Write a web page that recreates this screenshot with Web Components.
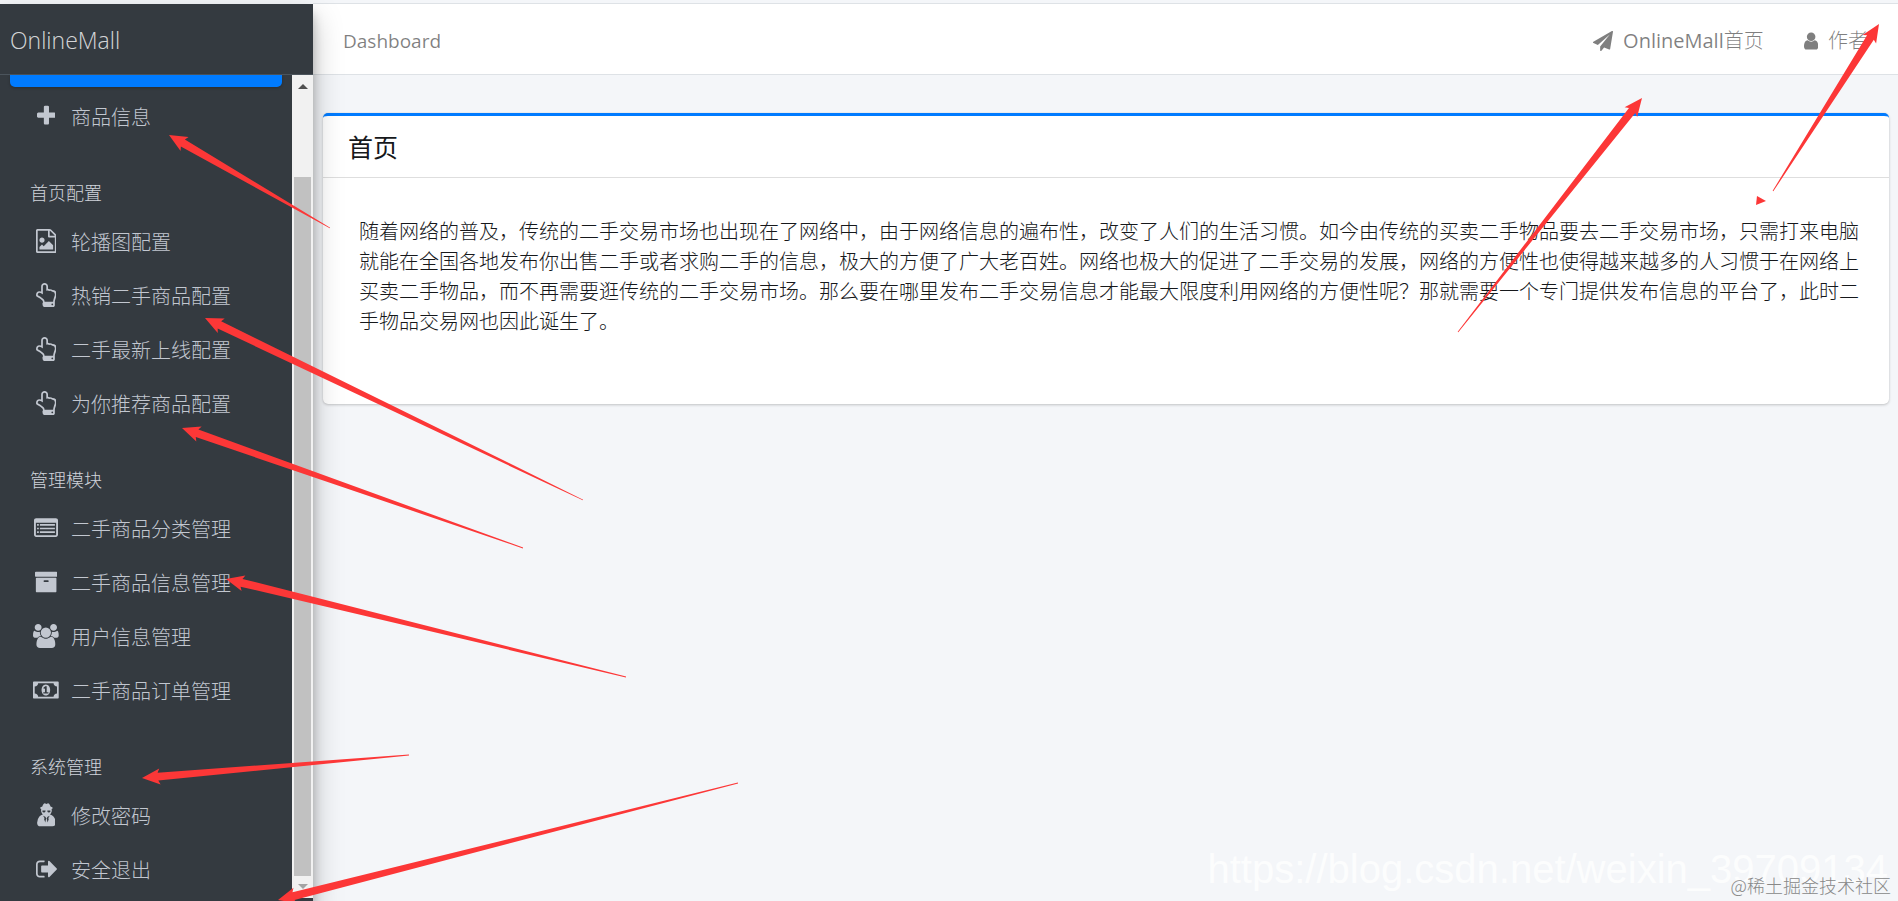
<!DOCTYPE html>
<html lang="zh-CN">
<head>
<meta charset="utf-8">
<title>OnlineMall | Dashboard</title>
<style>
  html, body {
    margin: 0;
    height: 100%;
  }

  body {
    font-family: "Open Sans", "Noto Sans CJK SC", sans-serif;
    font-size: 20px;
    font-weight: 300;
    line-height: 30px;
    color: #16181b;
    background: #f4f6f9;
  }

  top-link span {
    font-weight: 300;
  }
</style>
</head>
<body>
<mall-layout>
  <mall-sidebar slot="sidebar" brand="OnlineMall">
    <nav-item active></nav-item>
    <nav-item icon="plus">商品信息</nav-item>
    <nav-header>首页配置</nav-header>
    <nav-item icon="image">轮播图配置</nav-item>
    <nav-item icon="hand">热销二手商品配置</nav-item>
    <nav-item icon="hand">二手最新上线配置</nav-item>
    <nav-item icon="hand">为你推荐商品配置</nav-item>
    <nav-header>管理模块</nav-header>
    <nav-item icon="list">二手商品分类管理</nav-item>
    <nav-item icon="archive">二手商品信息管理</nav-item>
    <nav-item icon="users">用户信息管理</nav-item>
    <nav-item icon="money">二手商品订单管理</nav-item>
    <nav-header>系统管理</nav-header>
    <nav-item icon="secret">修改密码</nav-item>
    <nav-item icon="signout">安全退出</nav-item>
  </mall-sidebar>
  <mall-topbar slot="topbar">
    <top-link>Dashboard</top-link>
    <top-link slot="right" icon="plane">OnlineMall<span>首页</span></top-link>
    <top-link slot="right" icon="user"><span>作者</span></top-link>
  </mall-topbar>
  <mall-card>
    <span slot="title">首页</span>
    随着网络的普及，传统的二手交易市场也出现在了网络中，由于网络信息的遍布性，改变了人们的生活习惯。如今由传统的买卖二手物品要去二手交易市场，只需打来电脑就能在全国各地发布你出售二手或者求购二手的信息，极大的方便了广大老百姓。网络也极大的促进了二手交易的发展，网络的方便性也使得越来越多的人习惯于在网络上买卖二手物品，而不再需要逛传统的二手交易市场。那么要在哪里发布二手交易信息才能最大限度利用网络的方便性呢？那就需要一个专门提供发布信息的平台了，此时二手物品交易网也因此诞生了。
  </mall-card>
</mall-layout>
<water-mark>
  https://blog.csdn.net/weixin_39709134
  <span slot="site">@稀土掘金技术社区</span>
</water-mark>
<arrow-layer></arrow-layer>

<script>
const ICONS = {
  plus: { box: "192 0 1408 1792", d: "M1600 736v192q0 40-28 68t-68 28h-416v416q0 40-28 68t-68 28h-192q-40 0-68-28t-28-68v-416h-416q-40 0-68-28t-28-68v-192q0-40 28-68t68-28h416v-416q0-40 28-68t68-28h192q40 0 68 28t28 68v416h416q40 0 68 28t28 68z" },
  image: { box: "128 0 1536 1792", d: "M1596 380q28 28 48 76t20 88v1152q0 40-28 68t-68 28h-1344q-40 0-68-28t-28-68v-1600q0-40 28-68t68-28h896q40 0 88 20t76 48zm-444-244v376h376q-10-29-22-41l-313-313q-12-12-41-22zm384 1528v-1024h-416q-40 0-68-28t-28-68v-416h-768v1536h1280zm-128-448v320h-1024v-192l192-192 128 128 384-384zm-832-192q-80 0-136-56t-56-136 56-136 136-56 136 56 56 136-56 136-136 56z" },
  hand: { box: "128 0 1536 1792", d: "M1408 1600q0-26-19-45t-45-19-45 19-19 45 19 45 45 19 45-19 19-45zm128-764q0-189-167-189-26 0-56 5-16-30-52.5-47.5t-73.5-17.5-69 18q-50-53-119-53-25 0-55.5 10t-47.5 25v-331q0-52-38-90t-90-38q-51 0-89.5 39t-38.5 89v576q-20 0-48.5-15t-55-33-68-33-84.5-15q-67 0-97.5 44.5t-30.5 115.5q0 24 139 90 44 24 65 37 64 40 145 112 81 71 106 101 57 69 57 140v32h640v-32q0-72 32-167t64-193.5 32-179.5zm128-5q0 133-69 322-59 164-59 223v288q0 53-37.5 90.5t-90.5 37.5h-640q-53 0-90.5-37.5t-37.5-90.5v-288q0-10-4.5-21.5t-14-23.5-18-22.5-22.5-24-21.5-20.5-21.5-19-17-14q-74-65-129-100-21-13-62-33t-72-37-63-40.5-49.5-55-17.5-69.5q0-125 67-206.5t189-81.5q68 0 128 22v-374q0-104 77-180t179-76q105 0 181 75.5t76 180.5v169q62 4 119 37 21-3 43-3 101 0 178 60 139-1 219.5 85t80.5 227zM600 1520h660v190h-620z" },
  list: { box: "0 0 1792 1792", d: "M160 160h1472q66 0 113 47t47 113v1088q0 66-47 113t-113 47h-1472q-66 0-113-47t-47-113v-1088q0-66 47-113t113-47zM140 500v900q0 28 28 28h1456q28 0 28-28v-900zM230 600h128v128h-128zM230 870h128v128h-128zM230 1140h128v128h-128zM440 600h1120v128h-1120zM440 870h1120v128h-1120zM440 1140h1120v128h-1120z" },
  archive: { box: "64 0 1664 1792", d: "M1088 832q0-26-19-45t-45-19h-256q-26 0-45 19t-19 45 19 45 45 19h256q26 0 45-19t19-45zm576-192v960q0 26-19 45t-45 19h-1408q-26 0-45-19t-19-45v-960q0-26 19-45t45-19h1408q26 0 45 19t19 45zm64-448v256q0 26-19 45t-45 19h-1536q-26 0-45-19t-19-45v-256q0-26 19-45t45-19h1536q26 0 45 19t19 45z" },
  users: { box: "-64 0 1920 1792", d: "M529 896q-162 5-265 128h-134q-82 0-138-40.5t-56-118.5q0-353 124-353 6 0 43.5 21t97.5 42.5 119 21.5q67 0 133-23-5 37-5 66 0 139 81 256zm1071 637q0 120-73 189.5t-194 69.5h-874q-121 0-194-69.5t-73-189.5q0-53 3.5-103.5t14-109 26.5-108.5 43-97.5 62-81 85.5-53.5 111.5-20q10 0 43 21.5t73 48 107 48 135 21.5 135-21.5 107-48 73-48 43-21.5q61 0 111.5 20t85.5 53.5 62 81 43 97.5 26.5 108.5 14 109 3.5 103.5zm-1024-1277q0 106-75 181t-181 75-181-75-75-181 75-181 181-75 181 75 75 181zm704 384q0 159-112.5 271.5t-271.5 112.5-271.5-112.5-112.5-271.5 112.5-271.5 271.5-112.5 271.5 112.5 112.5 271.5zm576 225q0 78-56 118.5t-138 40.5h-134q-103-123-265-128 81-117 81-256 0-29-5-66 66 23 133 23 59 0 119-21.5t97.5-42.5 43.5-21q124 0 124 353zm-128-609q0 106-75 181t-181 75-181-75-75-181 75-181 181-75 181 75 75 181z" },
  money: { box: "0 0 1920 1792", d: "M768 1152h384v-96h-128v-448h-114l-148 137 77 80q42-37 55-57h2v288h-128v96zm512-256q0 70-21 142t-59.5 134-101.5 101-138 39-138-39-101.5-101-59.5-134-21-142 21-142 59.5-134 101.5-101 138-39 138 39 101.5 101 59.5 134 21 142zm512 256v-512q-106 0-181-75t-75-181h-1152q0 106-75 181t-181 75v512q106 0 181 75t75 181h1152q0-106 75-181t181-75zm128-832v1152q0 26-19 45t-45 19h-1792q-26 0-45-19t-19-45v-1152q0-26 19-45t45-19h1792q26 0 45 19t19 45z" },
  secret: { box: "192 0 1408 1792", d: "M700 50q50-40 120-10l76 30 76-30q70-30 120 10 80 80 110 210 170 50 170 110 0 50-90 80 40 140-30 270-30 80-90 130 160 40 260 160 170 210 170 460 0 270-250 270h-892q-250 0-250-270 0-250 170-460 100-120 260-160-60-50-90-130-70-130-30-270-90-30-90-80 0-60 170-110 30-130 110-210zM600 560v90q20 50 110 50 90 0 120-90v-50zM962 560v50q30 90 120 90 90 0 110-50v-90zM650 950l110 180-40 70 90 260 70-330-70-100zM1142 950l-110 180 40 70-90 260-70-330 70-100z" },
  signout: { box: "64 0 1568 1792", d: "M704 1440q0 4 1 20t.5 26.5-3 23.5-10 19.5-20.5 6.5h-320q-119 0-203.5-84.5t-84.5-203.5v-704q0-119 84.5-203.5t203.5-84.5h320q13 0 22.5 9.5t9.5 22.5q0 4 1 20t.5 26.5-3 23.5-10 19.5-20.5 6.5h-320q-66 0-113 47t-47 113v704q0 66 47 113t113 47h312l11.5 1 11.5 3 8 5.5 7 9 2 13.5zm928-544q0 26-19 45l-544 544q-19 19-45 19t-45-19-19-45v-288h-448q-26 0-45-19t-19-45v-384q0-26 19-45t45-19h448v-288q0-26 19-45t45-19 45 19l544 544q19 19 19 45z" },
  plane: { box: "0 0 1792 1792", d: "M1764 11q33 24 27 64l-256 1536q-5 29-32 45-14 8-31 8-11 0-24-5l-453-185-242 295q-18 23-49 23-13 0-22-4-19-7-30.5-23.5t-11.5-36.5v-349l864-1059-1069 925-395-162q-37-14-40-55-2-40 32-59l1664-960q15-9 32-9 20 0 36 11z" },
  user: { box: "256 0 1280 1792", d: "M1536 1399q0 109-62.5 187t-150.5 78h-854q-88 0-150.5-78t-62.5-187q0-85 8.5-160.5t31.5-152 58.5-131 94-89 134.5-34.5q131 128 313 128t313-128q76 0 134.5 34.5t94 89 58.5 131 31.5 152 8.5 160.5zm-256-887q0 159-112.5 271.5t-271.5 112.5-271.5-112.5-112.5-271.5 112.5-271.5 271.5-112.5 271.5 112.5 112.5 271.5z" },
};

function icon(name) {
  const { box, d } = ICONS[name];
  const rule = name === "hand" ? "nonzero" : "evenodd";
  return `<svg viewBox="${box}" fill="currentColor" fill-rule="${rule}" aria-hidden="true"><path d="${d}"/></svg>`;
}

class MallLayout extends HTMLElement {
  constructor() {
    super();
    this.attachShadow({ mode: "open" }).innerHTML = `
      <style>
        :host {
          display: grid;
          grid-template-columns: 313px minmax(0, 1fr);
          min-height: 100vh;
          box-sizing: border-box;
          padding-top: 3px;
          overflow: hidden;
        }

        .main {
          display: flex;
          flex-direction: column;
        }

        .content {
          padding: 38px 9px 10px 10px;
        }
      </style>
      <slot name="sidebar"></slot>
      <div class="main">
        <slot name="topbar"></slot>
        <main class="content"><slot></slot></main>
      </div>
    `;
  }
}

class MallSidebar extends HTMLElement {
  constructor() {
    super();
    this.attachShadow({ mode: "open" }).innerHTML = `
      <style>
        :host {
          display: flex;
          flex-direction: column;
          position: relative;
          z-index: 1;
          margin-top: 1px;
          background: #343a40;
          box-shadow: 0 14px 28px rgba(0, 0, 0, 0.25), 0 10px 10px rgba(0, 0, 0, 0.22);
        }

        .brand {
          padding: 16px 10px 14px;
          border-bottom: 1px solid #4b545c;
          font-size: 23px;
          line-height: 40px;
          color: rgba(255, 255, 255, 0.8);
          text-decoration: none;
        }

        .scroll {
          display: flex;
          flex: 1;
        }

        nav {
          flex: 1;
          padding: 0 10px;
        }

        ::slotted(:last-child) {
          margin-bottom: 0;
        }

        .bar {
          display: flex;
          flex-direction: column;
          align-items: center;
          box-sizing: border-box;
          width: 21px;
          margin-bottom: 3px;
          padding: 9px 2px;
          background: #f1f1f1;
        }

        .thumb {
          flex: 1;
          align-self: stretch;
          margin: 88px 0 8px;
          background: #c1c1c1;
        }

        .up, .down {
          border: 5px solid transparent;
          border-top-width: 0;
          border-bottom-color: #505050;
        }

        .down {
          border-width: 5px 5px 0;
          border-top-color: #a3a3a3;
        }
      </style>
      <a class="brand" href="#">${this.getAttribute("brand")}</a>
      <div class="scroll">
        <nav><slot></slot></nav>
        <div class="bar">
          <i class="up"></i>
          <i class="thumb"></i>
          <i class="down"></i>
        </div>
      </div>
    `;
  }
}

class NavItem extends HTMLElement {
  constructor() {
    super();
    const name = this.getAttribute("icon");
    this.attachShadow({ mode: "open" }).innerHTML = `
      <style>
        :host {
          display: block;
          margin-bottom: 4px;
        }

        /* scrolled away, only its lower edge shows under the brand */
        :host([active]) {
          height: 12px;
          margin-bottom: 5px;
          border-radius: 0 0 5px 5px;
          background: #007bff;
          box-shadow: 0 1px 3px rgba(0, 0, 0, 0.24);
        }

        a {
          display: flex;
          align-items: center;
          gap: 9px;
          padding: 11px 20px 9px;
          color: #c2c7d0;
          text-decoration: none;
          white-space: nowrap;
        }

        .icon {
          display: flex;
          justify-content: center;
          width: 32px;
          padding-bottom: 4px;
        }

        svg {
          height: 24px;
        }
      </style>
      ${name ? `<a href="#"><span class="icon">${icon(name)}</span><slot></slot></a>` : ""}
    `;
  }
}

class NavHeader extends HTMLElement {
  constructor() {
    super();
    this.attachShadow({ mode: "open" }).innerHTML = `
      <style>
        :host {
          display: block;
          padding: 34px 20px 10px;
          font-size: 18px;
          line-height: 27px;
          color: #d0d4db;
        }
      </style>
      <slot></slot>
    `;
  }
}

class MallTopbar extends HTMLElement {
  constructor() {
    super();
    this.attachShadow({ mode: "open" }).innerHTML = `
      <style>
        :host {
          display: flex;
          justify-content: space-between;
          padding: 10px;
          border: solid #dee2e6;
          border-width: 1px 0;
          background: #fff;
        }

        .left {
          font-size: 19px;
        }

        .right {
          display: flex;
        }
      </style>
      <div class="left"><slot></slot></div>
      <div class="right"><slot name="right"></slot></div>
    `;
  }
}

class TopLink extends HTMLElement {
  constructor() {
    super();
    const name = this.getAttribute("icon");
    this.attachShadow({ mode: "open" }).innerHTML = `
      <style>
        :host {
          display: block;
        }

        a {
          display: flex;
          align-items: center;
          gap: 10px;
          padding: 12px 20px 8px;
          color: rgba(0, 0, 0, 0.5);
          font-weight: 400;
          text-decoration: none;
        }

        svg {
          height: 20px;
        }
      </style>
      <a href="#">${name ? icon(name) : ""}<span><slot></slot></span></a>
    `;
  }
}

class MallCard extends HTMLElement {
  constructor() {
    super();
    this.attachShadow({ mode: "open" }).innerHTML = `
      <style>
        :host {
          display: block;
          border-top: 3px solid #007bff;
          border-radius: 5px;
          background: #fff;
          box-shadow: 0 0 1px rgba(0, 0, 0, 0.13), 0 1px 3px rgba(0, 0, 0, 0.2);
        }

        h3 {
          margin: 0;
          padding: 16px 25px 14px;
          border-bottom: 1px solid rgba(0, 0, 0, 0.13);
          font-size: 25px;
          font-weight: 400;
          line-height: 31px;
        }

        p {
          margin: 0;
          padding: 39px 26px 67px 36px;
        }
      </style>
      <h3><slot name="title"></slot></h3>
      <p><slot></slot></p>
    `;
  }
}

class WaterMark extends HTMLElement {
  constructor() {
    super();
    this.attachShadow({ mode: "open" }).innerHTML = `
      <style>
        :host {
          position: absolute;
          right: 10px;
          bottom: 10px;
          z-index: 2;
          font-family: "Liberation Sans", sans-serif;
          font-size: 40px;
          font-weight: 400;
          line-height: 44px;
          color: rgba(255, 255, 255, 0.8);
          pointer-events: none;
        }

        .site {
          position: absolute;
          right: -3px;
          bottom: -6px;
          font-family: "Noto Sans CJK SC", sans-serif;
          font-size: 18px;
          font-weight: 300;
          line-height: 24px;
          color: #888;
          white-space: nowrap;
        }
      </style>
      <slot></slot>
      <div class="site"><slot name="site"></slot></div>
    `;
  }
}

// tail x, tail y, tip x, tip y
const ARROWS = [
  [330, 228, 169, 135],
  [583, 500, 205, 318],
  [523, 548, 182, 428],
  [626, 677, 226, 579],
  [409, 755, 142, 778],
  [738, 783, 278, 900],
  [1458, 332, 1642, 98],
  [1773, 191, 1879, 24],
];

function arrowPoints([x1, y1, x2, y2]) {
  const length = Math.hypot(x2 - x1, y2 - y1);
  const ux = (x2 - x1) / length;
  const uy = (y2 - y1) / length;
  const at = (back, side) => `${x2 - ux * back - uy * side},${y2 - uy * back + ux * side}`;
  return [at(0, 0), at(18, 8), at(16, 4), at(length, 0.4), at(length, -0.4), at(16, -4), at(18, -8)].join(" ");
}

class ArrowLayer extends HTMLElement {
  constructor() {
    super();
    this.attachShadow({ mode: "open" }).innerHTML = `
      <style>
        :host {
          position: absolute;
          inset: 0;
          z-index: 3;
          overflow: hidden;
          pointer-events: none;
        }

        svg {
          display: block;
          width: 100%;
          height: 100%;
          fill: #fc3737;
        }
      </style>
      <svg aria-hidden="true">
        ${ARROWS.map((arrow) => `<polygon points="${arrowPoints(arrow)}"/>`).join("")}
        <polygon points="1757,196 1766,201 1756,205"/>
      </svg>
    `;
  }
}

customElements.define("mall-layout", MallLayout);
customElements.define("mall-sidebar", MallSidebar);
customElements.define("nav-item", NavItem);
customElements.define("nav-header", NavHeader);
customElements.define("mall-topbar", MallTopbar);
customElements.define("top-link", TopLink);
customElements.define("mall-card", MallCard);
customElements.define("water-mark", WaterMark);
customElements.define("arrow-layer", ArrowLayer);
</script>
</body>
</html>
